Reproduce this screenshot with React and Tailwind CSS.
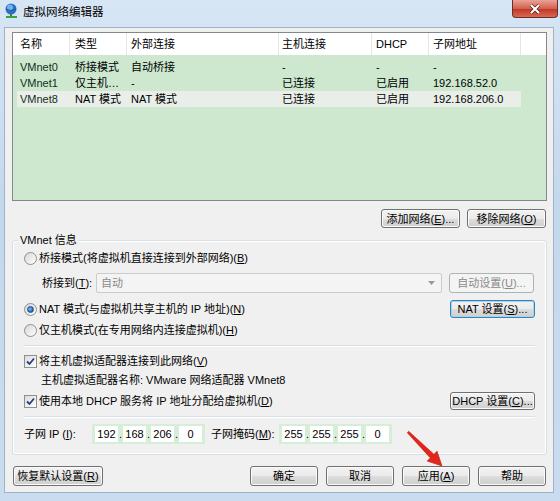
import React from 'react'
import clsx from 'clsx'

const cols = [
  { w: 'w-[57px]', pl: 'pl-[7px]' },
  { w: 'w-[57px]', pl: 'pl-[5px]' },
  { w: 'w-[152px]', pl: 'pl-[4px]' },
  { w: 'w-[93px]', pl: 'pl-[3px]' },
  { w: 'w-[57px]', pl: 'pl-[4px]' },
  { w: 'w-[92px]', pl: 'pl-[4px]' },
]

const header = ['名称', '类型', '外部连接', '主机连接', 'DHCP', '子网地址']

const rows = [
  ['VMnet0', '桥接模式', '自动桥接', '-', '-', '-'],
  ['VMnet1', '仅主机…', '-', '已连接', '已启用', '192.168.52.0'],
  ['VMnet8', 'NAT 模式', 'NAT 模式', '已连接', '已启用', '192.168.206.0'],
]

const Btn = ({ className, children, disabled, focused }) => (
  <div
    className={clsx(
      'flex items-center justify-center rounded-[3px] border whitespace-nowrap',
      disabled
        ? 'border-[#adb2b5] bg-[#f4f4f4] text-[#8a8a8a]'
        : 'bg-[linear-gradient(#f2f2f2,#ebebeb_50%,#dddddd_50%,#cfcfcf)] text-black',
      !disabled && (focused ? 'border-[#3c7fb1] shadow-[inset_0_0_0_1px_#9fd8f3]' : 'border-[#707070] shadow-[inset_0_0_0_1px_#fbfbfb]'),
      className
    )}
  >
    {children}
  </div>
)

const Radio = ({ checked }) => (
  <div className="w-[13px] h-[13px] rounded-full border border-[#8e8f8f] bg-[linear-gradient(135deg,#d6d6d6,#ffffff)] flex items-center justify-center shrink-0">
    {checked && <div className="w-[7px] h-[7px] rounded-full bg-[radial-gradient(circle_at_40%_40%,#7fc4f5,#1e5fb3_70%)] border border-[#1b4f8f]" />}
  </div>
)

const Check = () => (
  <div className="w-[13px] h-[13px] border border-[#8e8f8f] bg-[linear-gradient(135deg,#dcdcdc,#ffffff)] flex items-center justify-center shrink-0">
    <svg width="9" height="9" viewBox="0 0 9 9">
      <path d="M1 4.5 L3.5 7 L8 1.5" fill="none" stroke="#2a3f74" strokeWidth="1.8" />
    </svg>
  </div>
)

const IpField = ({ parts }) => (
  <div className="h-[20px] flex items-center bg-[#d6eed7] px-[3px] py-[2px] shrink-0">
    {parts.map((p, i) => (
      <React.Fragment key={i}>
        {i > 0 && <span className="w-[5px] text-center leading-none">.</span>}
        <div className="w-[23px] h-[16px] bg-white flex items-center justify-center">{p}</div>
      </React.Fragment>
    ))}
  </div>
)

const Sep = () => <div className="mt-[6px] h-[2px] border-t border-[#d5dfe5] border-b border-b-white" />

export default function App() {
  return (
    <div className="relative w-[560px] h-[501px] overflow-hidden bg-[linear-gradient(180deg,#d7e6f5,#c4d8ed_40%,#cadcef)] flex flex-col font-['Liberation_Sans','Noto_Sans_CJK_SC',sans-serif] text-[11px] leading-[16px] text-black">
      {/* title bar */}
      <div className="h-[27px] flex items-start shrink-0">
        <div className="pl-[5px] pt-[3px]">
          <svg width="14" height="16" viewBox="0 0 14 16">
            <circle cx="6" cy="6" r="5.5" fill="#2d6fc4" />
            <circle cx="5" cy="4.5" r="3" fill="#8fd0ff" opacity="0.7" />
            <path d="M1 6 Q6 9 11 6" stroke="#1a4f8e" fill="none" strokeWidth="0.8" />
            <rect x="5" y="11" width="2" height="2" fill="#3a8a2e" />
            <rect x="1" y="13" width="11" height="2" fill="#3aa23a" />
          </svg>
        </div>
        <div className="ml-[4px] h-[24px] flex items-center text-[11.5px] text-black">虚拟网络编辑器</div>
        <div className="ml-auto mr-[2px] w-[46px] h-[18px] rounded-b-[4px] border border-t-0 border-[#6b2f2a] bg-[linear-gradient(#e8a395,#d4614d_50%,#c2382a_55%,#d86a52)] flex items-center justify-center">
          <svg width="12" height="10" viewBox="0 0 12 10">
            <path d="M2 1 L10 9 M10 1 L2 9" stroke="#4a1410" strokeWidth="3.4" />
            <path d="M2 1 L10 9 M10 1 L2 9" stroke="#ffffff" strokeWidth="2.2" />
          </svg>
        </div>
      </div>

      {/* client area */}
      <div className="ml-[4px] w-[550px] h-[466px] bg-[#f0f0f0] border border-[#9fb2c7] flex flex-col shrink-0">
        {/* list view */}
        <div className="ml-[7px] mt-[4px] w-[535px] h-[169px] border border-[#828790] bg-[#cde8cf] flex flex-col">
          <div className="h-[22px] bg-white flex shrink-0">
            {header.map((h, i) => (
              <div key={i} className={clsx(cols[i].w, cols[i].pl, 'flex items-center border-r border-[#e5e5e5]')}>{h}</div>
            ))}
            <div className="flex-1" />
          </div>
          <div className="mt-[4px] flex flex-col">
            {rows.map((r, ri) => (
              <div key={ri} className="h-[16px] flex">
                <div className={clsx('flex ml-[4px]', ri === 2 && 'bg-[#e9eee9]')}>
                  {r.map((c, ci) => (
                    <div key={ci} className={clsx(ci === 0 ? 'w-[53px] pl-[3px] text-[#10301a]' : cols[ci].w, ci !== 0 && cols[ci].pl, 'flex items-center whitespace-nowrap overflow-hidden')}>{c}</div>
                  ))}
                </div>
              </div>
            ))}
          </div>
        </div>

        {/* add / remove */}
        <div className="mt-[8px] h-[19px] flex justify-end gap-[7px] pr-[7px] shrink-0">
          <Btn className="w-[79px]">添加网络(<u>E</u>)...</Btn>
          <Btn className="w-[79px]">移除网络(<u>O</u>)</Btn>
        </div>

        {/* group box */}
        <div className="relative ml-[7px] mt-[12px] w-[535px] h-[215px] rounded-[3px] border border-[#d5dfe5] shadow-[inset_0_0_0_1px_#ffffff] pl-[11px] pr-[11px] flex flex-col shrink-0">
          <div className="absolute -top-[9px] left-[5px] px-[2px] bg-[#f0f0f0]">VMnet 信息</div>

          <div className="mt-[9px] h-[16px] flex items-center gap-[2px] whitespace-nowrap">
            <Radio />
            <span>桥接模式(将虚拟机直接连接到外部网络)(<u>B</u>)</span>
          </div>

          <div className="mt-[7px] h-[20px] flex items-center whitespace-nowrap">
            <span className="ml-[18px] w-[54px] shrink-0">桥接到(<u>T</u>):</span>
            <div className="w-[346px] h-[20px] border border-[#c9cdd1] rounded-[2px] bg-[#f4f4f4] flex items-center pl-[4px] pr-[6px] text-[#8a8a8a] shrink-0">
              <span>自动</span>
              <svg className="ml-auto" width="7" height="4" viewBox="0 0 7 4"><path d="M0 0 H7 L3.5 4 Z" fill="#9a9a9a" /></svg>
            </div>
            <Btn disabled className="ml-[7px] w-[85px] h-[20px] shrink-0">自动设置(<u>U</u>)...</Btn>
          </div>

          <div className="mt-[7px] h-[18px] flex items-center gap-[2px] whitespace-nowrap">
            <Radio checked />
            <span>NAT 模式(与虚拟机共享主机的 IP 地址)(<u>N</u>)</span>
            <Btn focused className="ml-auto w-[85px] h-[18px]">NAT 设置(<u>S</u>)...</Btn>
          </div>

          <div className="mt-[4px] h-[16px] flex items-center gap-[2px] whitespace-nowrap">
            <Radio />
            <span>仅主机模式(在专用网络内连接虚拟机)(<u>H</u>)</span>
          </div>

          <div className="mt-[1px]"><Sep /></div>

          <div className="mt-[6px] h-[16px] flex items-center gap-[2px] whitespace-nowrap">
            <Check />
            <span>将主机虚拟适配器连接到此网络(<u>V</u>)</span>
          </div>

          <div className="mt-[3px] h-[16px] flex items-center pl-[17px] whitespace-nowrap">
            <span>主机虚拟适配器名称: VMware 网络适配器 VMnet8</span>
          </div>

          <div className="mt-[4px] h-[18px] flex items-center gap-[2px] whitespace-nowrap">
            <Check />
            <span>使用本地 DHCP 服务将 IP 地址分配给虚拟机(<u>D</u>)</span>
            <Btn className="ml-auto w-[85px] h-[18px]">DHCP 设置(<u>C</u>)...</Btn>
          </div>

          <Sep />

          <div className="mt-[6px] h-[20px] flex items-center whitespace-nowrap">
            <span className="w-[68px] shrink-0">子网 IP (<u>I</u>):</span>
            <IpField parts={['192', '168', '206', '0']} />
            <span className="ml-[6px] w-[68px] shrink-0">子网掩码(<u>M</u>):</span>
            <IpField parts={['255', '255', '255', '0']} />
          </div>
        </div>

        {/* bottom buttons */}
        <div className="mt-[11px] h-[20px] flex pl-[8px] pr-[7px] shrink-0">
          <Btn className="w-[90px]">恢复默认设置(<u>R</u>)</Btn>
          <div className="ml-auto flex gap-[8px]">
            <Btn className="w-[68px]">确定</Btn>
            <Btn className="w-[68px]">取消</Btn>
            <Btn className="w-[68px]">应用(<u>A</u>)</Btn>
            <Btn className="w-[68px]">帮助</Btn>
          </div>
        </div>
      </div>

      {/* annotation arrow */}
      <svg className="absolute left-[400px] top-[425px]" width="50" height="48" viewBox="0 0 50 48">
        <polygon points="8.7,6.3 33.9,29.3 37.05,26.15 42,41 27.1,36.05 30.3,32.9 7.3,7.7" fill="#e3261c" stroke="#c21a12" strokeWidth="0.6" />
      </svg>
    </div>
  )
}
